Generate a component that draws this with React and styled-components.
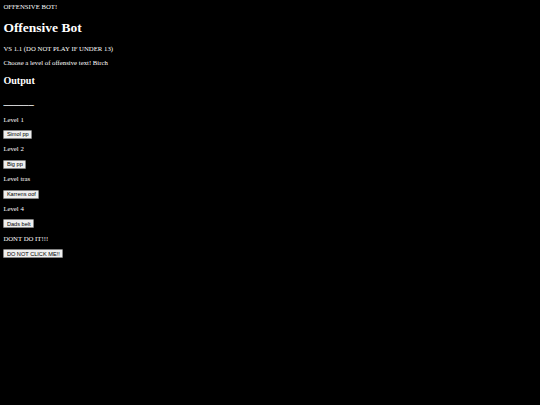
import React from "react";
import styled, { createGlobalStyle } from "styled-components";

const Global = createGlobalStyle`
  html, body { background: #000; }
  body {
    margin: 3.375px;
    color: #fff;
    font-family: "Liberation Serif", "Times New Roman", serif;
    font-size: 6.75px;
    line-height: 7.76px;
  }
`;

const Page = styled.main`
  display: block;
`;

const Title = styled.div``;

const H1 = styled.h1`
  font-size: 13.5px;
  line-height: 15.5px;
  margin: 9.05px 0;
`;

const H2 = styled.h2`
  font-size: 10.125px;
  line-height: 11.65px;
  margin: 8.4px 0;
`;

const Text = styled.p`
  margin: 6.75px 0;
`;

const ButtonRow = styled.div`
  height: 8.6px;
  display: flex;
  align-items: center;
`;

const Btn = styled.button`
  font-family: "Liberation Sans", Arial, sans-serif;
  font-size: 5.625px;
  line-height: 6.45px;
  padding: 0.42px 2.5px;
  margin: 0;
  height: 9px;
  background: #efefef;
  color: #000;
  border: 1px solid #858585;
  border-radius: 1px;
`;

const levels = [
  ["Level 1", "Simol pp"],
  ["Level 2", "Big pp"],
  ["Level tras", "Karrens oof"],
  ["Level 4", "Dads belt"],
  ["DONT DO IT!!!", "DO NOT CLICK ME!!"],
];

export default function App() {
  return (
    <>
      <Global />
      <Page>
        <Title>OFFENSIVE BOT!</Title>
        <H1>Offensive Bot</H1>
        <Text>VS 1.1 (DO NOT PLAY IF UNDER 13)</Text>
        <Text>Choose a level of offensive text! Birch</Text>
        <H2>Output</H2>
        <H2>______</H2>
        {levels.map(([label, btn]) => (
          <React.Fragment key={label}>
            <Text>{label}</Text>
            <ButtonRow>
              <Btn>{btn}</Btn>
            </ButtonRow>
          </React.Fragment>
        ))}
      </Page>
    </>
  );
}
